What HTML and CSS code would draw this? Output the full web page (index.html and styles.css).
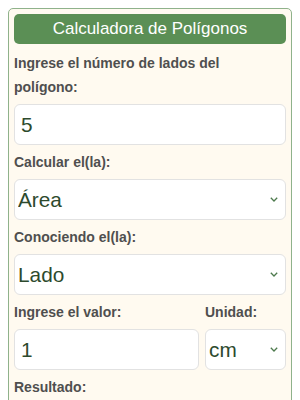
FILE: index.html
```html
<!DOCTYPE html>
<html lang="es">
<head>
<meta charset="utf-8">
<title>Calculadora de Polígonos</title>
<link rel="stylesheet" href="styles.css">
</head>
<body>
<div class="calc">
  <div class="title">Calculadora de Polígonos</div>
  <label class="lbl" for="lados">Ingrese el número de lados del polígono:</label>
  <input class="field" id="lados" type="text" value="5">
  <label class="lbl" for="calc">Calcular el(la):</label>
  <div class="selwrap">
    <select class="field sel" id="calc"><option>Área</option><option>Perímetro</option></select>
    <svg class="chev" width="8" height="5" viewBox="0 0 8 5"><path d="M0.8 0.8 L4 4 L7.2 0.8" fill="none" stroke="#4d7a4d" stroke-width="1.3"/></svg>
  </div>
  <label class="lbl" for="con">Conociendo el(la):</label>
  <div class="selwrap">
    <select class="field sel" id="con"><option>Lado</option><option>Apotema</option></select>
    <svg class="chev" width="8" height="5" viewBox="0 0 8 5"><path d="M0.8 0.8 L4 4 L7.2 0.8" fill="none" stroke="#4d7a4d" stroke-width="1.3"/></svg>
  </div>
  <div class="pair">
    <div class="col">
      <label class="lbl" for="valor">Ingrese el valor:</label>
      <input class="field" id="valor" type="text" value="1">
    </div>
    <div class="col">
      <label class="lbl" for="unidad">Unidad:</label>
      <div class="selwrap">
        <select class="field sel" id="unidad"><option>cm</option><option>m</option></select>
        <svg class="chev" width="8" height="5" viewBox="0 0 8 5"><path d="M0.8 0.8 L4 4 L7.2 0.8" fill="none" stroke="#4d7a4d" stroke-width="1.3"/></svg>
      </div>
    </div>
  </div>
  <label class="lbl">Resultado:</label>
  <div class="field result"></div>
</div>
</body>
</html>
```
FILE: styles.css
```css
html, body {
  margin: 0;
  padding: 0;
  background: #ffffff;
}
body {
  padding: 8px;
  font-family: "Liberation Sans", Arial, sans-serif;
}
.calc {
  border: 1px solid #8fb28b;
  border-radius: 5px;
  background: #fffaf0;
  padding: 5px;
  display: flex;
  flex-direction: column;
}
.title {
  background: #5b8f55;
  color: #ffffff;
  border-radius: 5px;
  height: 30px;
  line-height: 30px;
  text-align: center;
  font-size: 17px;
  margin-bottom: 2px;
}
.lbl {
  display: block;
  font-weight: bold;
  font-size: 14px;
  line-height: 24px;
  color: #4f4f4f;
  margin: 5px 0;
}
.field {
  box-sizing: border-box;
  display: block;
  width: 100%;
  height: 41px;
  margin: 0;
  border: 1px solid #e2e2e2;
  border-radius: 6px;
  background: #ffffff;
  font-family: "Liberation Sans", Arial, sans-serif;
  font-size: 20.8px;
  color: #2d4a2d;
  padding: 0 6px;
  outline: none;
}
.selwrap {
  position: relative;
}
.sel {
  -webkit-appearance: none;
  appearance: none;
  padding: 0 20px 0 3px;
}
.chev {
  position: absolute;
  right: 8px;
  top: 18px;
  pointer-events: none;
}
.pair {
  display: grid;
  grid-template-columns: 1fr 81px;
  column-gap: 6px;
}
.col {
  display: flex;
  flex-direction: column;
}
.result {
  height: 40px;
}
```
